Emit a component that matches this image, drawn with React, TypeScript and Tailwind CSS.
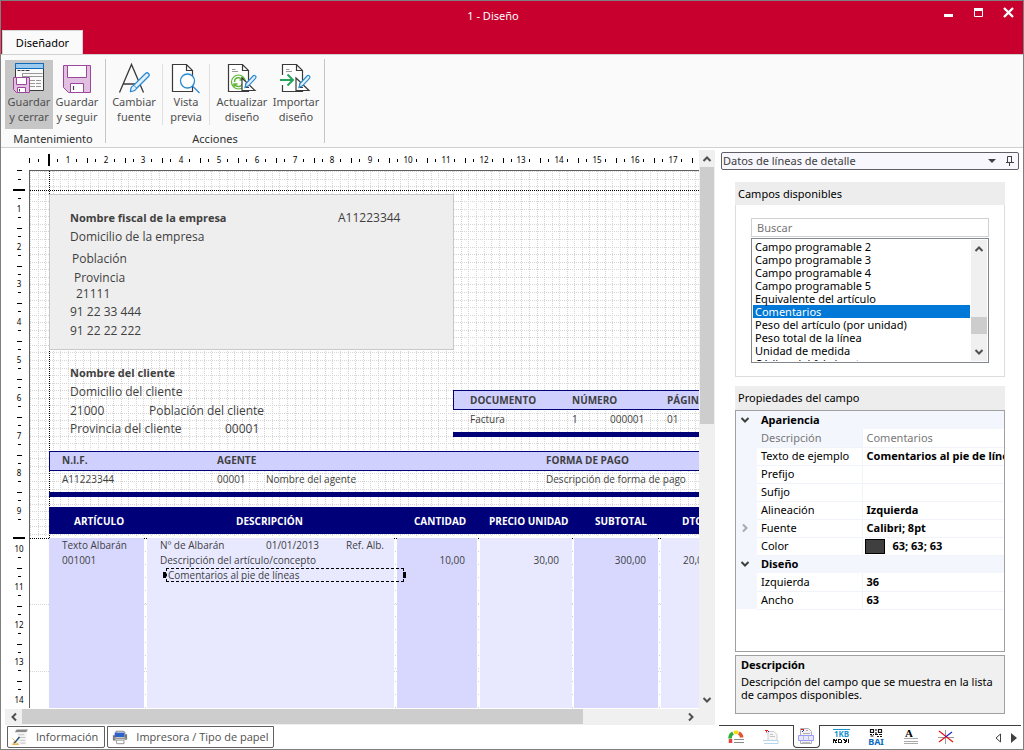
import { ReactNode, useState } from 'react'

type Field = {
  text: string
  at: string
  look?: string
}

const topMarks = Array.from({ length: 18 }, (_, i) => i)
const sideMarks = Array.from({ length: 15 }, (_, i) => i)
const gridLines = Array.from({ length: 260 }, (_, i) => Math.round(i * 7.56))
const gridRows = gridLines.filter((y) => y < 367)

const pageFields: Field[] = [
  { text: 'Nombre fiscal de la empresa', at: 'left-[40px] top-[39px]', look: 'text-[11px] font-bold' },
  { text: 'A11223344', at: 'left-[308px] top-[39px]' },
  { text: 'Domicilio de la empresa', at: 'left-[40px] top-[58px]' },
  { text: 'Población', at: 'left-[42px] top-[80px]' },
  { text: 'Provincia', at: 'left-[44px] top-[99px]' },
  { text: '21111', at: 'left-[46px] top-[115px]' },
  { text: '91 22 33 444', at: 'left-[40px] top-[133px]' },
  { text: '91 22 22 222', at: 'left-[40px] top-[152px]' },
  { text: 'Nombre del cliente', at: 'left-[40px] top-[194px]', look: 'text-[11px] font-bold' },
  { text: 'Domicilio del cliente', at: 'left-[40px] top-[213px]' },
  { text: '21000', at: 'left-[40px] top-[232px]' },
  { text: 'Población del cliente', at: 'left-[119px] top-[232px]' },
  { text: 'Provincia del cliente', at: 'left-[40px] top-[250px]' },
  { text: '00001', at: 'left-[195px] top-[250px]' },
]

const smallFields: Field[] = [
  { text: 'DOCUMENTO', at: 'left-[440px] top-[221px]', look: 'font-bold' },
  { text: 'NÚMERO', at: 'left-[542px] top-[221px]', look: 'font-bold' },
  { text: 'PÁGINA', at: 'left-[637px] top-[221px]', look: 'font-bold' },
  { text: 'Factura', at: 'left-[440px] top-[240px]' },
  { text: '1', at: 'left-[542px] top-[240px]' },
  { text: '000001', at: 'left-[580px] top-[240px]' },
  { text: '01', at: 'left-[637px] top-[240px]' },
  { text: 'N.I.F.', at: 'left-[32px] top-[281px]', look: 'font-bold' },
  { text: 'AGENTE', at: 'left-[187px] top-[281px]', look: 'font-bold' },
  { text: 'FORMA DE PAGO', at: 'left-[516px] top-[281px]', look: 'font-bold' },
  { text: 'A11223344', at: 'left-[32px] top-[300px]' },
  { text: '00001', at: 'left-[187px] top-[300px]' },
  { text: 'Nombre del agente', at: 'left-[236px] top-[300px]' },
  { text: 'Descripción de forma de pago', at: 'left-[516px] top-[300px]' },
  { text: 'ARTÍCULO', at: 'left-[44px] top-[342px]', look: 'font-bold text-white' },
  { text: 'DESCRIPCIÓN', at: 'left-[206px] top-[342px]', look: 'font-bold text-white' },
  { text: 'CANTIDAD', at: 'left-[384px] top-[342px]', look: 'font-bold text-white' },
  { text: 'PRECIO UNIDAD', at: 'left-[459px] top-[342px]', look: 'font-bold text-white' },
  { text: 'SUBTOTAL', at: 'left-[565px] top-[342px]', look: 'font-bold text-white' },
  { text: 'DTO', at: 'left-[652px] top-[342px]', look: 'font-bold text-white' },
  { text: 'Texto Albarán', at: 'left-[32px] top-[366px]' },
  { text: 'Nº de Albarán', at: 'left-[130px] top-[366px]' },
  { text: '01/01/2013', at: 'left-[236px] top-[366px]' },
  { text: 'Ref. Alb.', at: 'left-[316px] top-[366px]' },
  { text: '001001', at: 'left-[32px] top-[381px]' },
  { text: 'Descripción del artículo/concepto', at: 'left-[130px] top-[381px]' },
  { text: '10,00', at: 'left-[375px] top-[381px] w-[60px]', look: 'text-right' },
  { text: '30,00', at: 'left-[469px] top-[381px] w-[60px]', look: 'text-right' },
  { text: '300,00', at: 'left-[556px] top-[381px] w-[60px]', look: 'text-right' },
  { text: '20,00', at: 'left-[653px] top-[381px]' },
]

const columns = [
  'left-[19px] w-[95px] bg-[#d8d8ff]',
  'left-[117px] w-[247px] bg-[#e8e8ff]',
  'left-[367px] w-[80px] bg-[#d8d8ff]',
  'left-[450px] w-[92px] bg-[#e8e8ff]',
  'left-[544px] w-[84px] bg-[#d8d8ff]',
  'left-[631px] w-[90px] bg-[#e8e8ff]',
]

const fieldNames = [
  'Campo programable 2',
  'Campo programable 3',
  'Campo programable 4',
  'Campo programable 5',
  'Equivalente del artículo',
  'Comentarios',
  'Peso del artículo (por unidad)',
  'Peso total de la línea',
  'Unidad de medida',
  'Código del fabricante',
]

const groups = [
  {
    name: 'Apariencia',
    rows: [
      { name: 'Descripción', value: 'Comentarios', disabled: true },
      { name: 'Texto de ejemplo', value: 'Comentarios al pie de líneas' },
      { name: 'Prefijo', value: '' },
      { name: 'Sufijo', value: '' },
      { name: 'Alineación', value: 'Izquierda' },
      { name: 'Fuente', value: 'Calibri; 8pt', expand: true },
      { name: 'Color', value: '63; 63; 63', swatch: true },
    ],
  },
  {
    name: 'Diseño',
    rows: [
      { name: 'Izquierda', value: '36' },
      { name: 'Ancho', value: '63' },
    ],
  },
]

const Chevron = ({ d, className = 'text-[#505050]' }: { d: string; className?: string }) => (
  <svg width="10" height="10" viewBox="0 0 10 10" className={className}>
    <path d={d} fill="none" stroke="currentColor" strokeWidth="2" />
  </svg>
)

const up = 'M1.5 7 5 3.5 8.5 7'
const down = 'M1.5 3 5 6.5 8.5 3'
const left = 'M7 1.5 3.5 5 7 8.5'
const right = 'M3 1.5 6.5 5 3 8.5'

const SaveCloseIcon = () => (
  <svg width="32" height="32" viewBox="0 0 32 32">
    <path d="M2.5 1.5h28v27h-28z" fill="#fafafa" stroke="#3a3a3a" />
    <path d="M2.5 1.5h28v5h-28z" fill="#9cc9ee" stroke="#0f6cbd" />
    <path d="M4.5 8.500h3m1 0h3m1 0h4" stroke="#3a3a3a" />
    <path d="M9.500 11.500h20M9.500 14.500h20M9.500 11v4" stroke="#999" />
    <path d="M17 18.500h12M17 21.500h12M17 24.500h12" stroke="#999" strokeDasharray="5 1" />
    <path d="M.5 15.500h16v15h-13l-3-3z" fill="#e0bfe0" stroke="#9c479c" />
    <path d="M3.500 15.500h10v7h-10z" fill="#fff" stroke="#9c479c" />
    <path d="M4.500 30.500v-5h8v5z" fill="#fff" stroke="#9c479c" />
    <path d="M6.500 27v2.500" stroke="#444" />
  </svg>
)

const SaveIcon = () => (
  <svg width="32" height="32" viewBox="-2 -3 32 32">
    <path d="M.5.5h27v27h-22l-5-5z" fill="#e0bfe0" stroke="#9c479c" />
    <path d="M4.500.5h19v12h-19z" fill="#fff" stroke="#9c479c" />
    <path d="M7.500 27.500v-9h13v9z" fill="#fff" stroke="#9c479c" />
    <path d="M10.500 21v4" stroke="#444" strokeWidth="1.200" />
  </svg>
)

const FontIcon = () => (
  <svg width="32" height="32" viewBox="0 0 32 32">
    <path d="m1.500 30.500 12-28 12 28M5.500 22h16" fill="none" stroke="#3a3a3a" strokeWidth="1.300" />
    <path
      d="M12.500 29.500c0-3 .5-5 3-6l12-12c2-2 5 .8 3 3l-12 12c-1.500 2.500-3.500 3-6 3z"
      fill="#e4f1fb"
      stroke="#2b8ad0"
      strokeWidth="1.300"
    />
    <path d="m16 23.500 2.500 2.500" stroke="#2b8ad0" />
  </svg>
)

const SheetShape = () => (
  <path d="M2.500 2.500h14l6 6v21h-20zM16.500 2.500v6h6" fill="#fff" stroke="#3a3a3a" strokeWidth="1.200" />
)

const PreviewIcon = () => (
  <svg width="32" height="32" viewBox="0 0 32 32">
    <SheetShape />
    <circle cx="17.500" cy="19" r="7" fill="#fff" stroke="#2b8ad0" strokeWidth="1.300" />
    <path d="m22.500 24 7 7" stroke="#2b8ad0" strokeWidth="1.300" />
  </svg>
)

const SetSquare = () => (
  <>
    <path d="M16 16v12.500h13z" fill="#fff" stroke="#3a3a3a" strokeWidth="1.200" />
    <path d="M19.500 21.500v4h3.500" fill="none" stroke="#3a3a3a" />
    <path
      d="m19 25.500 1-4 7-7.500c1.500-1.500 4 .5 2.500 2.300l-7 7.500z"
      fill="#e4f1fb"
      stroke="#2b8ad0"
      strokeWidth="1.200"
    />
  </>
)

const UpdateIcon = () => (
  <svg width="32" height="32" viewBox="0 0 32 32">
    <SheetShape />
    <path d="M6 7.500h3.500M6 9.500h6" stroke="#999" />
    <circle cx="12.500" cy="20" r="7" fill="#fff" stroke="#5cb531" strokeWidth="1.200" />
    <path
      d="M8.500 20c0-5 6-5.500 8-2M17 15v3h-3.500M16.500 20.500c0 5-6 5-8 2M8 25v-3h3.500"
      fill="none"
      stroke="#5cb531"
      strokeWidth="1.400"
    />
    <SetSquare />
  </svg>
)

const ImportIcon = () => (
  <svg width="32" height="32" viewBox="0 0 32 32">
    <SheetShape />
    <path d="M6 7.500h3.500M6 9.500h6" stroke="#999" />
    <path d="M2.500 13v10" stroke="#fff" strokeWidth="3" />
    <path d="M0 18h12.500M7.500 12.500 13 18l-5.500 5.500" fill="none" stroke="#27a35b" strokeWidth="2" />
    <SetSquare />
  </svg>
)

const RibbonButton = ({ icon, lines, className = '' }: { icon: ReactNode; lines: string[]; className?: string }) => (
  <button className={`flex h-[69px] flex-col items-center pt-0.5 leading-[15px] text-[#505050] ${className}`}>
    {icon}
    <span>{lines[0]}</span>
    <span>{lines[1]}</span>
  </button>
)

const TitleBar = () => (
  <header className="bg-[#c8002d]">
    <div className="flex h-[29px] items-center text-white">
      <h1 className="flex-1 pl-12 text-center">1 - Diseño</h1>
      <div className="flex items-center gap-2 pr-1 pb-1.5">
        <button aria-label="Minimizar" className="flex h-5 w-[22px] items-center justify-center">
          <svg width="11" height="11" viewBox="0 0 11 11">
            <path d="M1 7h9v3H1z" fill="#fff" />
          </svg>
        </button>
        <button aria-label="Maximizar" className="flex h-5 w-[22px] items-center justify-center">
          <svg width="11" height="11" viewBox="0 0 11 11">
            <path d="M1.500 1.500h8v8h-8z" fill="none" stroke="#fff" />
            <path d="M1 1h9v3H1z" fill="#fff" />
          </svg>
        </button>
        <button aria-label="Cerrar" className="flex h-5 w-[22px] items-center justify-center">
          <svg width="11" height="11" viewBox="0 0 11 11">
            <path d="m1 1 9 9m0-9-9 9" stroke="#fff" strokeWidth="2.400" />
          </svg>
        </button>
      </div>
    </div>
    <div className="flex h-6 px-px">
      <button className="h-[25px] w-[81px] border border-b-0 border-[#d4d4d4] bg-[#fafafa] text-black">Diseñador</button>
    </div>
  </header>
)

const Ribbon = () => (
  <div className="flex h-[94px] border-t border-b border-[#d0d0d0] bg-[#fafafa] pt-1 pl-1">
    <section className="flex w-[100px] flex-col">
      <div className="flex pt-px">
        <RibbonButton className="w-12 bg-[#c6c6c6]" icon={<SaveCloseIcon />} lines={['Guardar', 'y cerrar']} />
        <RibbonButton className="w-12" icon={<SaveIcon />} lines={['Guardar', 'y seguir']} />
      </div>
      <h2 className="pt-0.5 pr-1 text-center text-[#303030]">Mantenimiento</h2>
    </section>
    <section className="mb-1 flex w-[220px] flex-col border-x border-[#c6c6c6]">
      <div className="flex pt-px">
        <RibbonButton className="w-14" icon={<FontIcon />} lines={['Cambiar', 'fuente']} />
        <div className="my-1 w-px bg-[#e0e0e0]" />
        <RibbonButton className="w-[46px]" icon={<PreviewIcon />} lines={['Vista', 'previa']} />
        <div className="my-1 w-px bg-[#e0e0e0]" />
        <RibbonButton className="ml-0.5 w-[60px]" icon={<UpdateIcon />} lines={['Actualizar', 'diseño']} />
        <RibbonButton className="w-12" icon={<ImportIcon />} lines={['Importar', 'diseño']} />
      </div>
      <h2 className="pt-0.5 text-center text-[#303030]">Acciones</h2>
    </section>
  </div>
)

const TopRuler = () => (
  <svg width="100%" height="22" className="block" shapeRendering="crispEdges">
    <path d="M19 6h2v12h-2z" />
    {topMarks.map((n) => {
      const x = Math.round(n * 37.8)
      return (
        <g key={n}>
          {n > 0 && (
            <text x={x + 1} y="15" fontSize="8" textAnchor="middle">
              {n}
            </text>
          )}
          <path d={n === 0 ? 'M0 10h1v5h-1z' : `M${x + 20} 10h1v5h-1z`} />
          <path d={`M${x + 9} 11h1v3h-1zM${x + 28} 11h1v3h-1z`} />
        </g>
      )
    })}
  </svg>
)

const SideRuler = () => (
  <svg width="24" height="100%" className="block" shapeRendering="crispEdges">
    <path d="M8 19h12v2H8zM8 367h12v2H8z" />
    <path d="M12 0h5v1h-5z" />
    {sideMarks.map((n) => {
      const y = Math.round(n * 37.8)
      return (
        <g key={n}>
          {n > 0 && (
            <text x="14" y={y + 4} fontSize="8" textAnchor="middle">
              {n}
            </text>
          )}
          {n > 0 && n !== 9 && <path d={`M12 ${y + 20}h5v1h-5z`} />}
          <path d={`M13 ${y + 9}h3v1h-3zM13 ${y + 28}h3v1h-3z`} />
        </g>
      )
    })}
  </svg>
)

const Grid = () => (
  <svg width="100%" height="100%" className="absolute inset-0" shapeRendering="crispEdges">
    <path d={gridLines.map((x) => `M${x + 0.5} 0v366`).join('')} stroke="#d6d6d6" strokeDasharray="1 1" />
    <path d={gridRows.map((y) => `M0 ${y + 0.5}h1900`).join('')} stroke="#d6d6d6" strokeDasharray="1 1" />
    <path d="M0 433.500h1900M0 500.500h1900" stroke="#d6d6d6" strokeDasharray="1 1" />
    {[115, 365, 448, 542, 629].map((x) => (
      <path key={x} d={`M${x + 0.5} 380v400`} stroke="#cfcfcf" strokeDasharray="1 12" />
    ))}
    <path d="M19.500 0v367M0 19.500h1900M0 367.500h1900" stroke="#000" strokeDasharray="1 1" />
  </svg>
)

const Canvas = () => (
  <div className="relative overflow-hidden border-t border-l border-[#606060] bg-white font-['Open_Sans','Noto_Sans',sans-serif] text-[#3f3f3f]">
    <Grid />
    <div className="absolute top-[23px] left-[19px] h-[156px] w-[405px] border border-[#c8c8c8] bg-[#eeeeee]" />
    <div className="absolute top-[219px] right-0 left-[423px] h-5 border border-r-0 border-[#000078] bg-[#d0d0ff]" />
    <div className="absolute top-[261px] right-0 left-[423px] h-[5px] bg-[#000078]" />
    <div className="absolute top-[280px] right-0 left-[19px] h-5 border border-r-0 border-[#000078] bg-[#d0d0ff]" />
    <div className="absolute top-[321px] right-0 left-[19px] h-[5px] bg-[#000078]" />
    <div className="absolute top-[336px] right-0 left-[19px] h-[27px] bg-[#000078]" />
    {columns.map((c) => (
      <div key={c} className={`absolute top-[367px] bottom-0 ${c}`} />
    ))}
    {pageFields.map((f) => (
      <div key={f.at} className={`absolute leading-4 whitespace-nowrap ${f.at} ${f.look ?? 'text-xs'}`}>
        {f.text}
      </div>
    ))}
    {smallFields.map((f) => (
      <div key={f.at} className={`absolute text-[10px] leading-4 whitespace-nowrap ${f.at} ${f.look ?? ''}`}>
        {f.text}
      </div>
    ))}
    <div className="absolute top-[397px] left-[136px] flex h-[14px] w-[238px] items-center border border-dashed border-black pl-px text-[10px]">
      Comentarios al pie de líneas
      <i className="absolute top-[3px] -left-[4px] h-1.5 w-[3px] bg-black" />
      <i className="absolute top-[3px] -right-[3px] h-1.5 w-[3px] bg-black" />
    </div>
  </div>
)

const Designer = () => (
  <div className="grid min-h-0 flex-1 grid-cols-[24px_minmax(0,1fr)_16px] grid-rows-[22px_minmax(0,1fr)_17px] pl-1">
    <div />
    <TopRuler />
    <div className="row-span-2 mt-0.5 flex flex-col items-center bg-[#f0f0f0]">
      <div className="flex h-[17px] items-center">
        <Chevron d={up} />
      </div>
      <div className="min-h-0 w-full flex-1 pr-px pl-px">
        <div className="h-[49%] bg-[#cdcdcd]" />
      </div>
      <div className="flex h-[17px] items-center">
        <Chevron d={down} />
      </div>
    </div>
    <SideRuler />
    <Canvas />
    <div className="col-span-2 mt-px flex items-center bg-[#f0f0f0]">
      <div className="flex w-[17px] justify-center">
        <Chevron d={left} />
      </div>
      <div className="h-full flex-1 pb-px">
        <div className="h-full w-[85%] bg-[#cdcdcd]" />
      </div>
      <div className="flex w-[17px] justify-center">
        <Chevron d={right} />
      </div>
    </div>
    <div className="bg-[#f0f0f0]" />
  </div>
)

const SheetTabs = () => (
  <nav className="flex h-6 gap-0.5 pt-px pl-1.5 font-['Open_Sans','Noto_Sans',sans-serif] text-[#505050]">
    <button className="flex h-[22px] items-center gap-2 rounded-b-xs border border-[#606060] pr-1.5 pl-1">
      <svg width="16" height="18" viewBox="0 0 17 18">
        <path d="M5 1h12l-2 3H3z" fill="#888" />
        <path d="M5.500 4v13h10V4" fill="#f4f4f4" />
        <path d="M7 6.500h6M7 9.500h7M9 12.500h5M9 15.500h5" stroke="#c4c4c4" />
        <path d="M.5 10.500 3 13l-2.500 4H7l-2-2" fill="#fbd58a" stroke="#eab04c" />
        <path d="M2.500 15.500 8 9" stroke="#1f4e79" strokeWidth="1.500" />
      </svg>
      Información
    </button>
    <button className="flex h-[22px] items-center gap-2 rounded-b-xs border border-[#606060] pr-1 pl-1">
      <svg width="16" height="18" viewBox="0 0 18 18">
        <path d="M4.500 6V2.500h8l2 1V6" fill="#fff" stroke="#777" />
        <path d="M1 7h3v6H1zM14 6h3v6h-3z" fill="#777" />
        <path d="M3 4h11v5H3z" fill="#2f62c9" />
        <path d="M2 9.500h14v2H2z" fill="#999" />
        <path d="M4.500 12.500h9v4h-8z" fill="#fff" stroke="#888" />
      </svg>
      Impresora / Tipo de papel
    </button>
  </nav>
)

const FieldList = ({ query }: { query: string }) => {
  const [selected, setSelected] = useState('Comentarios')
  const names = fieldNames.filter((n) => n.toLowerCase().includes(query.toLowerCase()))

  return (
    <div className="flex h-[125px] border border-[#82868d] p-px">
      <ul role="listbox" aria-label="Campos disponibles" className="flex-1 overflow-hidden leading-[13px] text-black">
        {names.map((n) => (
          <li
            key={n}
            role="option"
            aria-selected={n === selected}
            onClick={() => setSelected(n)}
            className={n === selected ? 'bg-[#0078d7] pl-0.5 text-white' : 'pl-0.5'}
          >
            {n}
          </li>
        ))}
      </ul>
      <div className="ml-px flex w-4 flex-col items-center bg-[#f0f0f0] py-1">
        <Chevron d={up} />
        <div className="w-full flex-1 pt-[63px]">
          <div className="h-[17px] bg-[#cdcdcd]" />
        </div>
        <Chevron d={down} />
      </div>
    </div>
  )
}

const PropertyGrid = () => (
  <div className="h-[242px] border border-[#a0a0a0] text-black">
    <table className="w-full table-fixed border-collapse">
      <colgroup>
        <col className="w-[21px]" />
        <col className="w-[105px]" />
        <col />
      </colgroup>
      {groups.map((g) => (
        <tbody key={g.name}>
          <tr className="h-[18px] bg-[#f3f6fc]">
            <td className="p-0">
              <Chevron d={down} className="ml-1 text-[#404040]" />
            </td>
            <th colSpan={2} className="p-0 pl-1 text-left leading-4 font-bold">
              {g.name}
            </th>
          </tr>
          {g.rows.map((r) => (
            <tr key={r.name} className={r.disabled ? 'h-[18px] text-[#787878]' : 'h-[18px]'}>
              <td className="bg-[#f3f6fc] p-0">{r.expand && <Chevron d={right} className="ml-1 text-[#a8a8a8]" />}</td>
              <th
                className={`border-r border-b border-[#f0f3fa] p-0 pl-1 text-left leading-4 font-normal ${r.disabled ? 'bg-[#f3f6fc]' : ''}`}
              >
                {r.name}
              </th>
              <td
                className={`overflow-hidden border-b border-[#f0f3fa] p-0 leading-4 whitespace-nowrap ${r.disabled ? '' : 'font-bold'}`}
              >
                <div className={r.swatch ? 'flex items-center gap-2 pl-0.5' : 'pl-1'}>
                  {r.swatch && <span className="h-[15px] w-5 border border-black bg-[#3f3f3f]" />}
                  {r.value}
                </div>
              </td>
            </tr>
          ))}
        </tbody>
      ))}
    </table>
  </div>
)

const tabIcons = [
  {
    label: 'Colores',
    icon: (
      <>
        <path d="M2.500 14v-4" stroke="#e8433f" strokeWidth="3.500" />
        <path d="M2 9.500C2 7 3.200 5 5 4" fill="none" stroke="#2fae3c" strokeWidth="3.500" />
        <path d="M6 3.700c1.500-.6 2.800-.6 4.200-.1" fill="none" stroke="#f5d90a" strokeWidth="3.500" />
        <path d="M10.800 4c1.800 1 2.700 2.300 3 4.500" fill="none" stroke="#e5532d" strokeWidth="3.500" />
        <path d="M6 10.500h10M6 13.500h10" stroke="#8a8a8a" />
      </>
    ),
  },
  {
    label: 'Cabecera',
    icon: (
      <>
        <path d="M5 2.500h6l3 3v6H5z" fill="#f6f6f6" stroke="#ccc" />
        <path d="M2 1.500h3M3.500 2v1.500" stroke="#d22" />
        <path d="M5 2.500h1" stroke="#22c" />
        <path d="M0 11.500h15v3H1" fill="none" stroke="#b4d6ef" />
        <path d="M7 5.500h3M7 7.500h5" stroke="#c4c4c4" />
      </>
    ),
  },
  {
    label: 'Líneas',
    icon: (
      <>
        <path d="M2.500.5h8l3 3v12h-11z" fill="#f2f2f2" stroke="#b0b0b0" />
        <path d="M3 1.500h3" stroke="#d22" />
        <path d="M5 2.500h1M4 3.500h1" stroke="#22c" />
        <path d="M8 2.500h2M5 5.500h7" stroke="#b0b0b0" />
        <path d="M.5 7.500h15v5H.5z" fill="#e6e6ff" stroke="#9a9aff" />
        <path d="M5.500 8v4M10.500 8v4M4 14.500h8" stroke="#c0c0c0" />
      </>
    ),
  },
  {
    label: 'Ticket',
    icon: (
      <>
        <path d="M0 .5h17" stroke="#2196c9" />
        <text x="8.500" y="8" fontSize="8" fontWeight="bold" textAnchor="middle" fill="#1b95cf">
          1KB
        </text>
        <path
          d="M0 10h2v1h1v-1h1v2H3v1h1v1H2v-2H1v2H0zM5 10h3v1H6v2h2v-2h1v3H5zM10 10h2v1h1v-1h1v3h-1v1h-2v-1h1v-1h-1v-1h-1zM15 10h1v4h-1z"
          fill="#111"
        />
      </>
    ),
  },
  {
    label: 'BAI',
    icon: (
      <>
        <path
          d="M2.500 .5h3v3h-3zM10.500.5h3v3h-3zM2 5.500h2m1 0h1m1 0h3m1 0h3M2.500 7h3M8 0v2M8 3v3M9 7.500h2m1 0h2"
          fill="none"
          stroke="#111"
          strokeWidth="1.200"
        />
        <text x="8" y="16" fontSize="9" fontWeight="bold" textAnchor="middle" fill="#0a6bc0">
          BAI
        </text>
      </>
    ),
  },
  {
    label: 'Texto',
    icon: (
      <>
        <text x="6" y="8" fontSize="11" fontWeight="bold" textAnchor="middle" fontFamily="Liberation Serif, serif">
          A
        </text>
        <path d="M1 9.500h14M1 12.500h14M1 14.500h14" stroke="#aaa" />
      </>
    ),
  },
  {
    label: 'Ejes',
    icon: (
      <>
        <path d="M7.500 1v14M0 8.500h16" stroke="#999" />
        <path d="m1 2 14 11" stroke="#e11" strokeWidth="1.200" />
        <path d="M1 13 7.500 8" stroke="#e11" strokeWidth="1.200" />
        <path d="M7.500 8 14 3" stroke="#22c" strokeWidth="1.200" />
      </>
    ),
  },
]

const SidePanel = () => {
  const [query, setQuery] = useState('')

  return (
    <aside className="flex w-[308px] shrink-0 flex-col">
      <div className="mt-1 mr-1 ml-1.5 flex h-[18px] items-center rounded-xs border border-[#606068] bg-[#f7f7fd] pr-1 pl-px text-[#404040]">
        <h2 className="flex-1">Datos de líneas de detalle</h2>
        <button aria-label="Opciones" className="mr-2.5">
          <svg width="8" height="4" viewBox="0 0 8 4">
            <path d="M0 0h8L4 4z" fill="#404040" />
          </svg>
        </button>
        <button aria-label="Fijar">
          <svg width="8" height="10" viewBox="0 0 8 10">
            <path d="M1.500 6V.5h4V6M0 6.500h8M3.500 7v3" fill="none" stroke="#404040" />
            <path d="M5 0h1v6H5z" fill="#404040" />
          </svg>
        </button>
      </div>
      <div className="flex-1 pt-3 pr-[18px] pl-5">
        <h3 className="h-[23px] bg-[#ededed] pl-[3px] leading-6 text-black">Campos disponibles</h3>
        <div className="border border-t-0 border-[#dcdcdc] px-[15px] pt-[13px] pb-[13px]">
          <input
            aria-label="Buscar"
            placeholder="Buscar"
            value={query}
            onChange={(e) => setQuery(e.target.value)}
            className="mb-px block h-[19px] w-full border border-[#d0d0d0] pl-[5px] outline-none placeholder:text-[#757575]"
          />
          <FieldList query={query} />
        </div>
        <h3 className="mt-[9px] h-6 bg-[#ededed] pl-[3px] leading-6 text-black">Propiedades del campo</h3>
        <PropertyGrid />
        <div className="mt-[3px] h-[59px] border border-[#a0a0a0] bg-[#f0f0f0] pt-px pr-2 pl-[5px] text-black">
          <h4 className="font-bold">Descripción</h4>
          <p className="mt-0.5 leading-[13px]">Descripción del campo que se muestra en la lista de campos disponibles.</p>
        </div>
      </div>
      <nav className="mr-0.5 ml-1 flex h-6 items-start border-t border-[#404040]">
        <div className="flex">
          {tabIcons.map((t, i) => (
            <button
              key={t.label}
              aria-label={t.label}
              className={
                i === 2
                  ? 'mx-1 -mt-px flex h-[23px] w-[27px] items-center justify-center rounded-b-sm border border-t-0 border-[#404040] bg-white'
                  : 'flex h-[22px] w-[35px] items-center justify-center'
              }
            >
              <svg width="17" height="16" viewBox="0 0 17 16">
                {t.icon}
              </svg>
            </button>
          ))}
        </div>
        <div className="ml-auto flex h-6 items-center gap-2.5 pr-1">
          <button aria-label="Anterior">
            <svg width="6" height="10" viewBox="0 0 6 10">
              <path d="M5.500 1v8L1 5z" fill="#fff" stroke="#404040" />
            </svg>
          </button>
          <button aria-label="Siguiente">
            <svg width="6" height="10" viewBox="0 0 6 10">
              <path d="M0 0v10l6-5z" fill="#404040" />
            </svg>
          </button>
        </div>
      </nav>
    </aside>
  )
}

const App = () => {
  return (
    <div className="flex h-screen flex-col overflow-hidden border border-[#7f7f7f] bg-white font-['Noto_Sans','Open_Sans',sans-serif] text-[11px] leading-4">
      <TitleBar />
      <Ribbon />
      <main className="flex min-h-0 flex-1">
        <div className="flex min-w-0 flex-1 flex-col">
          <Designer />
          <SheetTabs />
        </div>
        <SidePanel />
      </main>
    </div>
  )
}

export default App
